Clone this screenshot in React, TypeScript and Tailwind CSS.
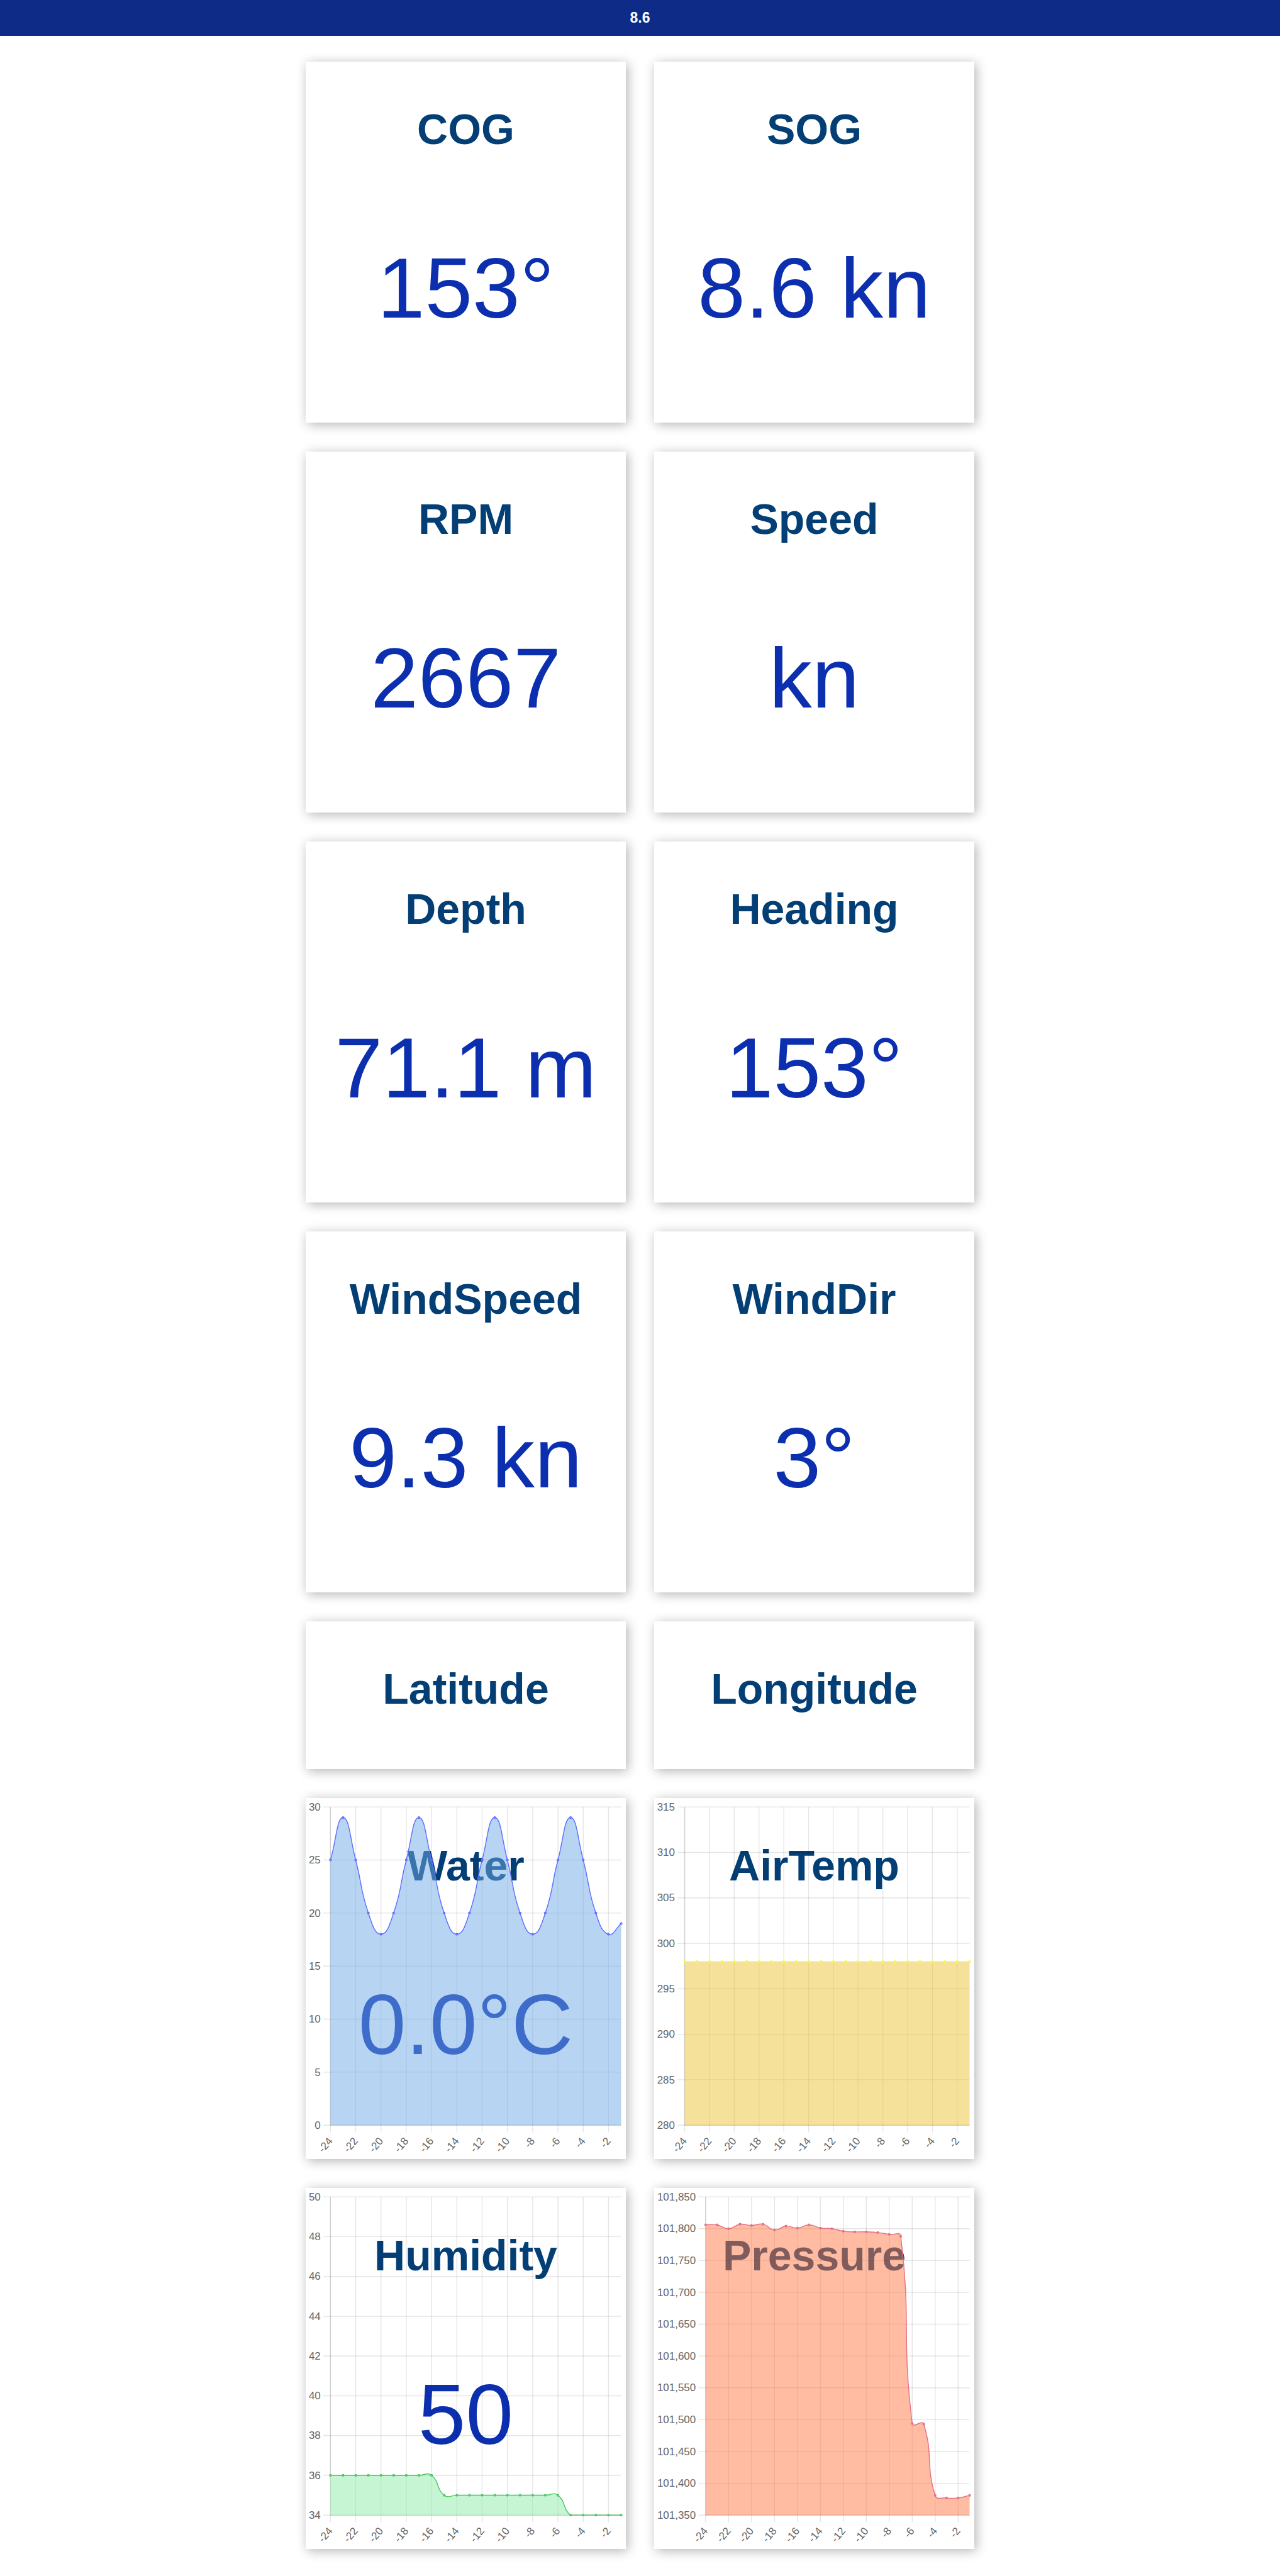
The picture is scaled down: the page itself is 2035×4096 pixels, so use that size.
type Reading = { title: string; value?: string; compact?: boolean; chart?: ChartData };

type ChartData = {
  left: number;
  min: number;
  max: number;
  step: number;
  line: string;
  fill: string;
  values: number[];
};

const repeat = (value: number, count: number) => Array.from({ length: count }, () => value);

const wave = [25, 29, 25, 20, 18, 20];

const charts: Record<string, ChartData> = {
  water: {
    left: 55,
    min: 0,
    max: 30,
    step: 5,
    line: "rgb(92,110,255)",
    fill: "rgba(112,170,230,0.5)",
    values: [...wave, ...wave, ...wave, 25, 29, 25, 20, 18, 19],
  },
  air: {
    left: 68,
    min: 280,
    max: 315,
    step: 5,
    line: "rgb(246,255,72)",
    fill: "rgba(236,196,54,0.5)",
    values: repeat(298, 24),
  },
  humidity: {
    left: 55,
    min: 34,
    max: 50,
    step: 2,
    line: "rgb(76,196,96)",
    fill: "rgba(139,236,168,0.5)",
    values: [...repeat(36, 9), ...repeat(35, 10), ...repeat(34, 5)],
  },
  pressure: {
    left: 115,
    min: 101350,
    max: 101850,
    step: 50,
    line: "rgb(228,112,132)",
    fill: "rgba(255,122,70,0.5)",
    values: [
      101806, 101806, 101800, 101807, 101805, 101807, 101798, 101804, 101801, 101806, 101801, 101800,
      101796, 101795, 101795, 101794, 101791, 101788, 101494, 101493, 101381, 101377, 101377, 101381,
    ],
  },
};

const readings: Reading[] = [
  { title: "COG", value: "153°" },
  { title: "SOG", value: "8.6 kn" },
  { title: "RPM", value: "2667" },
  { title: "Speed", value: "kn" },
  { title: "Depth", value: "71.1 m" },
  { title: "Heading", value: "153°" },
  { title: "WindSpeed", value: "9.3 kn" },
  { title: "WindDir", value: "3°" },
  { title: "Latitude", compact: true },
  { title: "Longitude", compact: true },
  { title: "Water", value: "0.0°C", chart: charts.water },
  { title: "AirTemp", chart: charts.air },
  { title: "Humidity", value: "50", chart: charts.humidity },
  { title: "Pressure", chart: charts.pressure },
];

const TOP = 20;
const BOTTOM = 735;
const RIGHT = 708;
const TENSION = 0.5;

type Point = { x: number; y: number };

const clampY = (y: number) => Math.min(BOTTOM, Math.max(TOP, y));

// Smooth curve through the points, with control points scaled by neighbour distance.
function curve(points: Point[]) {
  const handles = points.map((p, i) => {
    const prev = points[i - 1] ?? p;
    const next = points[i + 1] ?? p;
    const d01 = Math.hypot(p.x - prev.x, p.y - prev.y);
    const d12 = Math.hypot(next.x - p.x, next.y - p.y);
    const fa = (TENSION * d01) / (d01 + d12);
    const fb = (TENSION * d12) / (d01 + d12);
    return {
      before: { x: p.x - fa * (next.x - prev.x), y: clampY(p.y - fa * (next.y - prev.y)) },
      after: { x: p.x + fb * (next.x - prev.x), y: clampY(p.y + fb * (next.y - prev.y)) },
    };
  });
  return points
    .map((p, i) => {
      if (i === 0) return `M${p.x} ${p.y}`;
      const a = handles[i - 1].after;
      const b = handles[i].before;
      return `C${a.x} ${a.y} ${b.x} ${b.y} ${p.x} ${p.y}`;
    })
    .join(" ");
}

function Chart({ data, label }: { data: ChartData; label: string }) {
  const { left, min, max, step, line, fill, values } = data;
  const points = values.map((v, i) => ({
    x: left + (i * (RIGHT - left)) / (values.length - 1),
    y: BOTTOM - ((v - min) / (max - min)) * (BOTTOM - TOP),
  }));
  const path = curve(points);
  const yTicks = Array.from({ length: (max - min) / step + 1 }, (_, i) => ({
    value: min + i * step,
    y: BOTTOM - ((i * step) / (max - min)) * (BOTTOM - TOP),
  }));
  const xTicks = points.filter((_, i) => i % 2 === 0);

  return (
    <svg
      viewBox="0 0 718 811"
      role="img"
      aria-label={`${label} history`}
      className="absolute inset-0 h-full w-full"
    >
      <g stroke="rgba(0,0,0,0.1)" strokeWidth="2">
        {yTicks.map((t) => (
          <line key={t.value} x1={left - 16} x2={RIGHT} y1={t.y} y2={t.y} />
        ))}
        {xTicks.map((t) => (
          <line key={t.x} x1={t.x} x2={t.x} y1={TOP} y2={BOTTOM + 16} />
        ))}
        <line x1={left} x2={left} y1={TOP} y2={BOTTOM} />
        <line x1={left} x2={RIGHT} y1={BOTTOM} y2={BOTTOM} />
      </g>
      <path d={`${path} L${RIGHT} ${BOTTOM} L${left} ${BOTTOM} Z`} fill={fill} />
      <path d={path} fill="none" stroke={line} strokeWidth="2" />
      {points.map((p) => (
        <circle key={p.x} cx={p.x} cy={p.y} r="2" fill={fill} stroke={line} strokeWidth="2" />
      ))}
      <g fill="#666666" fontSize="24" textAnchor="end">
        {yTicks.map((t) => (
          <text key={t.value} x={left - 22} y={t.y + 8}>
            {t.value.toLocaleString("en-US")}
          </text>
        ))}
        {xTicks.map((t, i) => (
          <text key={t.x} transform={`translate(${t.x} 766) rotate(-50)`} y="8">
            {i * 2 - 24}
          </text>
        ))}
      </g>
    </svg>
  );
}

function Card({ title, value, compact, chart }: Reading) {
  return (
    <section
      className={`relative bg-white pt-[68px] text-center shadow-[3px_3px_17px_rgba(0,0,0,0.3)] ${
        compact ? "pb-[89px]" : "pb-[136px]"
      }`}
    >
      <h2 className="text-[68px] leading-[78px] font-bold text-[#033e75]">{title}</h2>
      {!compact && (
        <p className="mt-[136px] h-[156px] text-[136px] leading-[156px] whitespace-nowrap text-[#0b2faf]">
          {value}
        </p>
      )}
      {chart && <Chart data={chart} label={title} />}
    </section>
  );
}

export default function App() {
  return (
    <div className="min-h-screen bg-white font-['Liberation_Sans',Arial,sans-serif]">
      <header className="bg-[#0e2b87] py-4 text-center text-[23px] leading-[25px] font-bold text-white">
        8.6
      </header>
      <main className="mx-auto grid max-w-[1063px] grid-cols-2 gap-x-[45px] gap-y-[46px] pt-[41px] pb-[43px]">
        {readings.map((r) => (
          <Card key={r.title} {...r} />
        ))}
      </main>
    </div>
  );
}
